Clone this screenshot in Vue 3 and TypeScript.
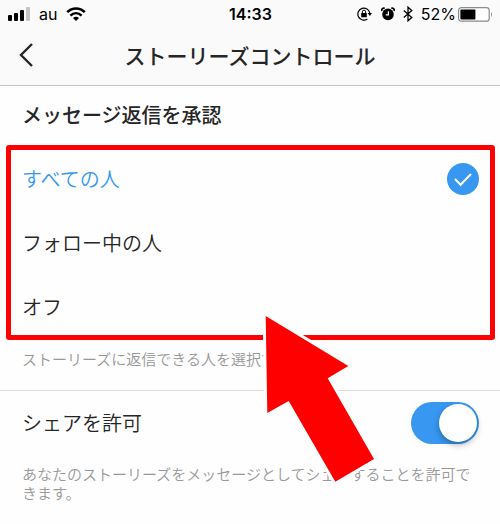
<script setup lang="ts">
import { ref } from 'vue'

interface ReplyOption {
  value: string
  label: string
}

const replyOptions: ReplyOption[] = [
  { value: 'everyone', label: 'すべての人' },
  { value: 'following', label: 'フォロー中の人' },
  { value: 'off', label: 'オフ' },
]

const replyFrom = ref('everyone')
const allowShare = ref(true)
</script>

<template>
  <div class="screen">
    <header class="top">
      <div class="status">
        <div class="status-side">
          <svg class="signal" width="22" height="14" viewBox="0 0 22 14" aria-hidden="true">
            <rect x="0" y="8" width="4" height="6" rx="1" />
            <rect x="6" y="6" width="4" height="8" rx="1" />
            <rect x="12" y="3" width="4" height="11" rx="1" />
            <rect x="18" y="0" width="4" height="14" rx="1" fill="#c4c4c4" />
          </svg>
          <span class="carrier">au</span>
          <svg width="20" height="14" viewBox="0 0 20 14" fill="none" stroke="#000" stroke-width="2.6" aria-hidden="true">
            <path d="M1.2 5.2C6.2 .2 13.8 .2 18.8 5.2" />
            <path d="M4.4 8.6C7.7 5.4 12.3 5.4 15.6 8.6" />
            <path d="M7 11C8.8 9.4 11.2 9.4 13 11L10 14Z" fill="#000" stroke="none" />
          </svg>
        </div>
        <time class="clock">14:33</time>
        <div class="status-side status-right">
          <svg class="lock" width="16" height="14" viewBox="0 0 16 14" aria-hidden="true">
            <path d="M10.4 12A6 6 0 1 1 12.8 6.2" fill="none" stroke="#000" stroke-width="1.2" />
            <path d="M10.6 6H15L12.8 9Z" />
            <rect x="4.2" y="6" width="5.6" height="4.2" rx=".5" />
            <path d="M5.4 6.4V4.8A1.6 1.6 0 0 1 8.6 4.8V6.4" fill="none" stroke="#000" stroke-width="1" />
          </svg>
          <svg class="alarm" width="14" height="14" viewBox="0 0 14 14" aria-hidden="true">
            <circle cx="7" cy="7.4" r="5.8" />
            <path d="M1 4A2 2 0 0 1 3.8 1.4M10.2 1.4A2 2 0 0 1 13 4" fill="none" stroke="#000" stroke-width="1.6" />
            <path d="M7.4 4.2V7.8H4.8" fill="none" stroke="#fff" stroke-width="1.2" />
          </svg>
          <svg class="bluetooth" width="10" height="16" viewBox="0 0 10 16" fill="none" stroke="#000" stroke-width="1.3" aria-hidden="true">
            <path d="M.8 4.4L8.8 11.4L5 14.8V1.2L8.8 4.6L.8 11.6" />
          </svg>
          <span class="percent">52%</span>
          <svg width="35" height="15" viewBox="0 0 35 15" aria-hidden="true">
            <rect x=".6" y=".6" width="30.6" height="13.6" rx="2.8" fill="#fff" stroke="#8c8c8c" stroke-width="1.2" />
            <rect x="2.4" y="2.6" width="15" height="9.8" rx=".6" />
            <path d="M33 5Q35 7.4 33 10Z" fill="#8c8c8c" />
          </svg>
        </div>
      </div>
      <nav class="nav">
        <button class="back" type="button" aria-label="戻る">
          <svg width="14" height="24" viewBox="0 0 14 24" fill="none" stroke="#262626" stroke-width="2.4" aria-hidden="true">
            <path d="M13 1L2 12L13 23" />
          </svg>
        </button>
        <h1 class="title">ストーリーズコントロール</h1>
      </nav>
    </header>

    <main>
      <section class="section replies">
        <h2 id="reply-heading" class="heading">メッセージ返信を承認</h2>
        <div class="options" role="radiogroup" aria-labelledby="reply-heading">
          <label
            v-for="option in replyOptions"
            :key="option.value"
            class="option"
            :class="{ selected: replyFrom === option.value }"
          >
            <span>{{ option.label }}</span>
            <span class="mark">
              <input v-model="replyFrom" class="radio" type="radio" name="reply-from" :value="option.value" />
              <svg
                v-if="replyFrom === option.value"
                class="tick"
                width="32"
                height="32"
                viewBox="0 0 32 32"
                fill="none"
                stroke="#fff"
                stroke-width="2"
                aria-hidden="true"
              >
                <path d="M8 16L13.6 21.8L24 11" />
              </svg>
            </span>
          </label>
        </div>
        <p class="help">ストーリーズに返信できる人を選択できます。</p>
      </section>

      <section class="section sharing">
        <div class="share-row">
          <label for="allow-share">シェアを許可</label>
          <input id="allow-share" v-model="allowShare" class="switch" type="checkbox" role="switch" />
        </div>
        <p class="help">あなたのストーリーズをメッセージとしてシェアすることを許可できます。</p>
      </section>
    </main>

    <svg class="arrow" width="116" height="174" viewBox="0 0 116 174" aria-hidden="true">
      <path
        d="M5.7 6L88.3 56L67.7 68.3L114 149L75.3 171.7L28.7 91L7.3 103Z"
        fill="#f00"
        stroke="#fff"
        stroke-width="6"
        paint-order="stroke"
      />
    </svg>
  </div>
</template>

<style>
body {
  margin: 0;
  background: #fefefe;
}
</style>

<style scoped>
.screen {
  position: relative;
  min-height: 100vh;
  overflow: hidden;
  color: #262626;
  font-family: "Noto Sans CJK JP", sans-serif;
}

.top {
  background: #fafafa;
  border-bottom: 1px solid #c6c6c6;
}

.status {
  display: grid;
  grid-template-columns: 1fr auto 1fr;
  align-items: center;
  height: 28px;
  padding: 0 7px 0 8px;
  color: #000;
  font-family: Inter, sans-serif;
  font-size: 16px;
  line-height: 20px;
}

.status-side {
  display: flex;
  align-items: center;
}

.status-right {
  justify-content: flex-end;
}

.carrier {
  margin: 0 9px;
}

.clock {
  font-weight: 600;
}

.lock {
  margin-right: 8px;
}

.alarm {
  margin-right: 8px;
}

.bluetooth {
  margin-right: 8px;
}

.percent {
  margin-right: 2px;
}

.nav {
  display: grid;
  grid-template-columns: 50px 1fr 50px;
  align-items: center;
  height: 53px;
  padding-bottom: 4px;
}

.back {
  display: flex;
  align-items: center;
  height: 44px;
  margin: 0;
  padding: 0 0 0 19px;
  border: 0;
  background: none;
  cursor: pointer;
}

.title {
  margin: 0;
  font-size: 21px;
  font-weight: 500;
  line-height: 28px;
  text-align: center;
}

.heading {
  margin: 0;
  padding: 15px 22px 16px;
  font-size: 20px;
  font-weight: 500;
  line-height: 28px;
}

.options {
  display: grid;
  gap: 32px;
  margin: 0 5px 0 6px;
  padding: 13px 11px 12px;
  border: 5px solid #f00;
  border-radius: 3px;
}

.option {
  display: flex;
  align-items: center;
  justify-content: space-between;
  height: 32px;
  font-size: 20px;
  font-weight: 350;
  line-height: 28px;
  cursor: pointer;
}

.selected {
  color: #3897f0;
}

.mark {
  position: relative;
  display: flex;
}

.radio {
  appearance: none;
  width: 32px;
  height: 32px;
  margin: 0;
  border-radius: 50%;
}

.radio:checked {
  background: #3897f0;
}

.tick {
  position: absolute;
  inset: 0;
  pointer-events: none;
}

.help {
  margin: 0;
  padding: 0 22px;
  color: #999;
  font-size: 15px;
  font-weight: 350;
  line-height: 19px;
}

.replies {
  padding-bottom: 22px;
  border-bottom: 1px solid #dbdbdb;
}

.replies .help {
  padding-top: 9px;
}

.share-row {
  display: flex;
  align-items: center;
  justify-content: space-between;
  height: 64px;
  padding: 0 21px 0 22px;
  font-size: 20px;
  font-weight: 350;
  line-height: 28px;
}

.switch {
  appearance: none;
  display: flex;
  box-sizing: border-box;
  width: 68px;
  height: 42px;
  margin: 0;
  padding: 2px;
  border-radius: 21px;
  background: #dbdbdb;
  cursor: pointer;
}

.switch::before {
  content: "";
  width: 38px;
  height: 38px;
  border-radius: 50%;
  background: #fff;
  box-shadow: 0 3px 6px rgb(0 0 0 / 30%);
}

.switch:checked {
  justify-content: flex-end;
  background: #3897f0;
}

.sharing .help {
  padding-top: 9px;
}

.arrow {
  position: absolute;
  top: 310px;
  left: 260px;
  pointer-events: none;
}
</style>
